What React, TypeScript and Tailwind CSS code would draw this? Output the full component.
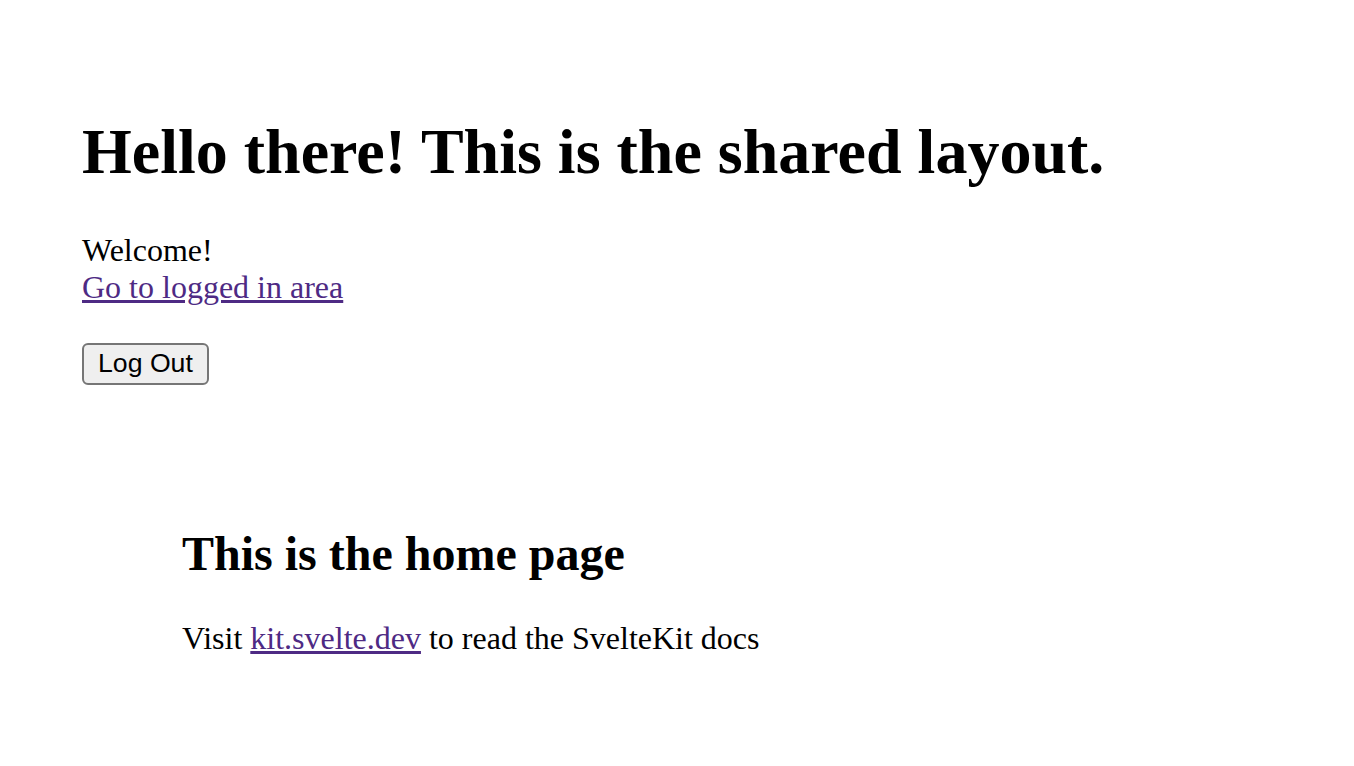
import React from 'react';

const serif = "font-['Liberation_Serif','Times_New_Roman',serif]";

export default function App() {
  return (
    <div className={`min-h-screen bg-white text-black ${serif}`}>
      <div className="pl-[82px] pt-[115px]">
        <h1 className="text-[64px] leading-[74px] font-bold">
          Hello there! This is the shared layout.
        </h1>

        <div className="mt-[43px] text-[32px] leading-[37px]">
          <p>Welcome!</p>
          <a href="#" className="text-[#4e2a84] underline">
            Go to logged in area
          </a>
        </div>

        <button className="mt-[37px] flex h-[42px] items-center rounded-[6px] border-2 border-[#767676] bg-[#efefef] px-[14px] pb-[2px] font-['Liberation_Sans',Arial,sans-serif] text-[26.67px] text-black">
          Log Out
        </button>

        {/* page slot */}
        <main className="mt-[141px] pl-[100px]">
          <h2 className="text-[48px] leading-[55px] font-bold">This is the home page</h2>
          <p className="mt-[39px] text-[32px] leading-[37px]">
            Visit{' '}
            <a href="#" className="text-[#4e2a84] underline">
              kit.svelte.dev
            </a>{' '}
            to read the SvelteKit docs
          </p>
        </main>
      </div>
    </div>
  );
}
